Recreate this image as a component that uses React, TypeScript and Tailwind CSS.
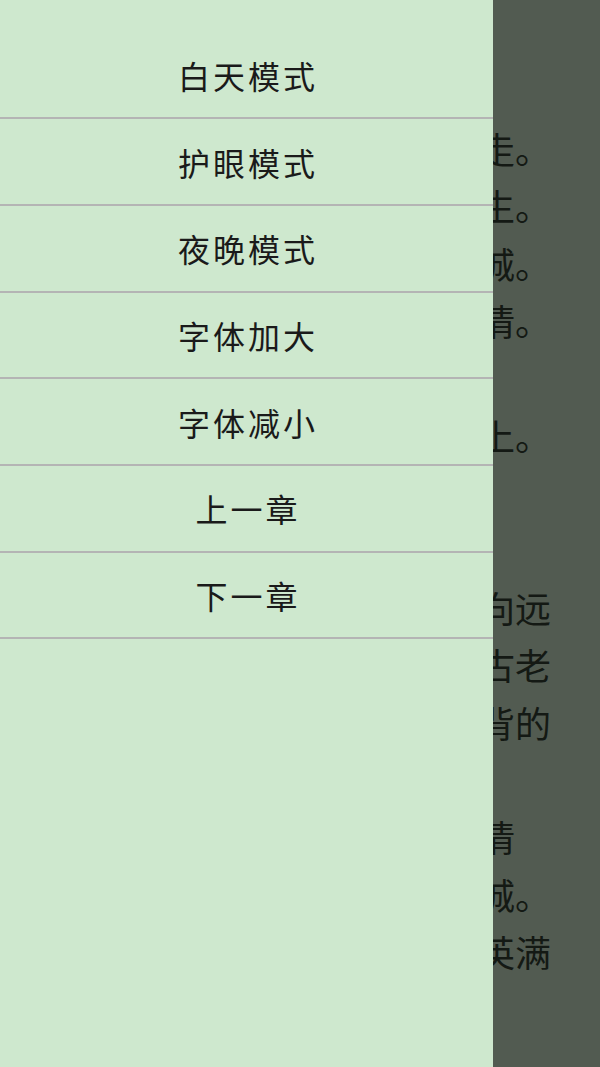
import React from "react";

const menu = ["白天模式", "护眼模式", "夜晚模式", "字体加大", "字体减小", "上一章", "下一章"];

const lines = [
  "　　第一章",
  "　　天色渐晚",
  "　　山路弯弯，他只能慢慢地走。",
  "　　一路风霜，见惯了人间众生。",
  "　　远处灯火，隐约是一座古城。",
  "　　他心中放不下那一段旧感情。",
  "　　夜色如水",
  "　　风吹山谷，月亮慢慢地爬上。",
  "　　他默默站着",
  "　　许久不语",
  "　　他知道，这一条路将会通向远",
  "　　方，通向传说中的那一座古老",
  "　　城池，也通向了他心中所背的",
  "　　过往。",
  "　　他轻叹一声，眼中满是深情",
  "　　他终究还是要回到那座古城。",
  "　　城外的桃花盛开，地上落英满",
  "　　地。",
];

export default function App() {
  return (
    <div
      className="relative w-[600px] h-[1067px] overflow-hidden bg-[#525b51]"
      style={{ fontFamily: '"AR PL UKai CN", "KaiTi", "Noto Sans CJK SC", sans-serif' }}
    >
      <div className="flex flex-col pt-[5px] pl-[11px] text-[36px] text-[#141914]">
        {lines.map((l, i) => (
          <div key={i} className="h-[57.4px] leading-[57.4px] whitespace-nowrap">
            {l}
          </div>
        ))}
      </div>
      <div className="absolute left-0 top-0 h-full w-[493px] bg-[#cee8ce] pt-[32.6px] flex flex-col">
        {menu.map((m) => (
          <div
            key={m}
            className="box-border h-[86.67px] border-b-2 border-[#b4b4b4] flex items-center justify-center text-[32px] tracking-[3px] pl-[3px] text-[#1a1a1a]"
          >
            {m}
          </div>
        ))}
      </div>
    </div>
  );
}
